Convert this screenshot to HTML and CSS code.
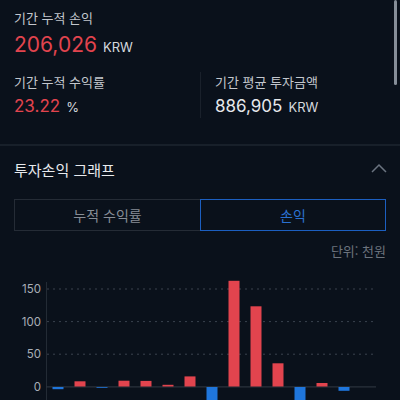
FILE: index.html
```html
<!DOCTYPE html>
<html lang="ko">
<head>
<meta charset="utf-8">
<link rel="stylesheet" href="styles.css">
</head>
<body>
<div class="scrollbar"></div>
<section class="summary">
  <div class="label">기간 누적 손익</div>
  <div class="big-row"><span class="big red">206,026</span><span class="unit">KRW</span></div>
  <div class="cols">
    <div class="col">
      <div class="label">기간 누적 수익률</div>
      <div class="mid-row"><span class="mid red">23.22</span><span class="unit">%</span></div>
    </div>
    <div class="col col-right">
      <div class="label">기간 평균 투자금액</div>
      <div class="mid-row"><span class="mid">886,905</span><span class="unit">KRW</span></div>
    </div>
  </div>
</section>
<div class="divider"></div>
<section class="graph">
  <div class="graph-head">
    <h2 class="title">투자손익 그래프</h2>
    <svg class="chev" width="16" height="10" viewBox="0 0 16 10"><path d="M1 9 L8 2 L15 9" fill="none" stroke="#6b7480" stroke-width="1.5"/></svg>
  </div>
  <div class="seg">
    <div class="seg-btn">누적 수익률</div>
    <div class="seg-btn active">손익</div>
  </div>
  <div class="unit-note">단위: 천원</div>
</section>
<svg class="chart" width="400" height="145" viewBox="0 261 400 145">
  <g class="grid">
    <line x1="47" y1="290" x2="376" y2="290"/>
    <line x1="47" y1="322.6" x2="376" y2="322.6"/>
    <line x1="47" y1="355.2" x2="376" y2="355.2"/>
  </g>
  <line class="axis" x1="46.5" y1="283" x2="46.5" y2="406"/>
  <line class="base" x1="46" y1="387.8" x2="376" y2="387.8"/>
  <g class="ylab">
    <text x="41" y="294">150</text>
    <text x="41" y="326.6">100</text>
    <text x="41" y="359.2">50</text>
    <text x="41" y="391.8">0</text>
  </g>
  <g class="bars">
    <rect class="neg" x="52.5" y="388" width="11" height="2.2"/>
    <rect class="pos" x="74.5" y="382.3" width="11" height="5.2"/>
    <rect class="neg" x="96.5" y="388" width="11" height="0.8"/>
    <rect class="pos" x="118.5" y="381.7" width="11" height="5.8"/>
    <rect class="pos" x="140.5" y="381.9" width="11" height="5.6"/>
    <rect class="pos" x="162.5" y="385.8" width="11" height="1.7"/>
    <rect class="pos" x="184.5" y="377.4" width="11" height="10.1"/>
    <rect class="neg" x="206.5" y="388" width="11" height="20"/>
    <rect class="pos" x="228.5" y="281.8" width="11" height="105.7"/>
    <rect class="pos" x="250.5" y="307.3" width="11" height="80.2"/>
    <rect class="pos" x="272.5" y="364.3" width="11" height="23.2"/>
    <rect class="neg" x="294.5" y="388" width="11" height="20"/>
    <rect class="pos" x="316.5" y="384" width="11" height="3.5"/>
    <rect class="neg" x="338.5" y="388" width="11" height="3.8"/>
  </g>
</svg>
</body>
</html>
```
FILE: styles.css
```css
html, body {
  margin: 0;
  padding: 0;
  background: #0a111b;
  width: 400px;
  height: 400px;
  overflow: hidden;
}
body {
  font-family: "Inter", "Noto Sans CJK KR", sans-serif;
  color: #e6e8eb;
  position: relative;
}
.scrollbar {
  position: absolute;
  top: 0;
  right: 3px;
  width: 3px;
  height: 85px;
  border-radius: 2px;
  background: #868e98;
}
.summary {
  padding: 8px 14px 0;
}
.label {
  font-size: 13px;
  line-height: 20px;
  color: #c3c7cd;
  font-family: "Noto Sans CJK KR", sans-serif;
}
.big-row {
  margin-top: 2px;
  height: 30px;
  display: flex;
  align-items: baseline;
}
.big {
  font-size: 21px;
  line-height: 30px;
}
.red {
  color: #e2444e;
}
.unit {
  font-size: 13px;
  color: #d6d9de;
  margin-left: 6px;
}
.cols {
  margin-top: 12px;
  display: grid;
  grid-template-columns: 1fr 1fr;
}
.col-right {
  border-left: 1px solid #1a212b;
  padding-left: 14px;
}
.mid-row {
  margin-top: 2px;
  height: 24px;
  display: flex;
  align-items: baseline;
}
.mid {
  font-size: 17px;
  line-height: 24px;
}
.divider {
  margin-top: 26px;
  height: 2px;
  background: #18202a;
}
.graph {
  padding: 12px 14px 0;
}
.graph-head {
  display: flex;
  justify-content: space-between;
  align-items: center;
  height: 24px;
}
.title {
  margin: 0;
  font-size: 15px;
  line-height: 24px;
  font-weight: 400;
  color: #e8eaed;
  font-family: "Noto Sans CJK KR", sans-serif;
}
.chev {
  margin-right: -1px;
  margin-top: -4px;
}
.seg {
  margin-top: 17px;
  display: grid;
  grid-template-columns: 1fr 1fr;
  height: 32px;
}
.seg-btn {
  display: flex;
  align-items: center;
  justify-content: center;
  font-size: 14px;
  font-family: "Noto Sans CJK KR", sans-serif;
  color: #878d96;
  border: 1px solid #252c36;
  border-right: none;
}
.seg-btn.active {
  color: #2a70d0;
  border: 1.5px solid #1c5fc0;
}
.unit-note {
  margin-top: 11px;
  text-align: right;
  font-size: 13px;
  line-height: 18px;
  color: #6c737d;
  font-family: "Noto Sans CJK KR", sans-serif;
}
.chart {
  display: block;
}
.grid line {
  stroke: #3a434f;
  stroke-width: 1;
  stroke-dasharray: 2 4;
}
.axis {
  stroke: #232b35;
  stroke-width: 1;
}
.base {
  stroke: #2a323d;
  stroke-width: 1.2;
}
.ylab text {
  font-family: "Inter", sans-serif;
  font-size: 11.5px;
  fill: #a9afb7;
  text-anchor: end;
}
.pos {
  fill: #e2444e;
}
.neg {
  fill: #1f76dc;
}
```
